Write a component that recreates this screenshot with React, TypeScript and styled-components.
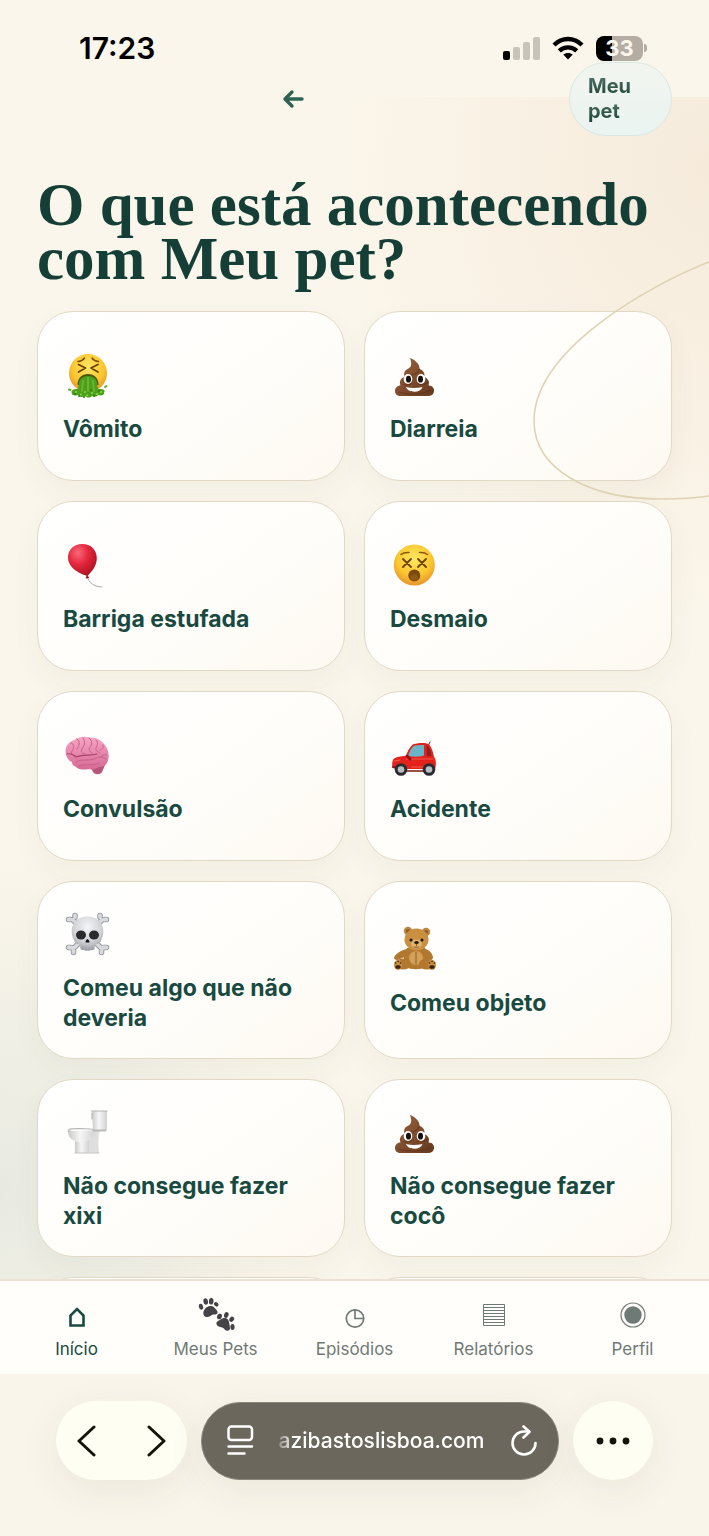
import { ReactNode } from "react"
import { createGlobalStyle, styled } from "styled-components"

const GlobalStyle = createGlobalStyle`
    * {
        box-sizing: border-box;
    }

    body {
        margin: 0;
        background: #fbf6eb;
        font-family: Inter, "Liberation Sans", sans-serif;
        color: #184a41;
    }

    button {
        border: 0 none;
        background: none;
        padding: 0;
        font-family: inherit;
        color: inherit;
        cursor: pointer;
    }

    svg {
        display: block;
        flex-shrink: 0;
    }
`

const Screen = styled.div`
    display: flex;
    flex-direction: column;
    height: 100vh;
    overflow: hidden;
    background:
        linear-gradient(#fbf6eb, #fbf6eb) 0 0 / 100% 97px no-repeat,
        radial-gradient(ellipse 380px 460px at 100% 170px, #f6ebdb 0%, #f6ebdb00 100%),
        radial-gradient(ellipse 300px 340px at 0 1190px, #e8eae1 0%, #e8eae100 100%),
        #fbf6eb;
`

const StatusBar = styled.div`
    display: flex;
    align-items: center;
    justify-content: space-between;
    flex-shrink: 0;
    height: 62px;
    padding: 34px 62px 0 79px;
    color: #000000;

    time {
        font-size: 30px;
        line-height: 28px;
        font-weight: 600;
    }
`

const StatusIcons = styled.div`
    display: flex;
    align-items: center;
    gap: 12px;
`

const Battery = styled.div`
    display: flex;
    align-items: center;
    gap: 1px;

    span {
        width: 47px;
        height: 25px;
        border-radius: 8px;
        background: linear-gradient(90deg, #000000 34%, #b3ada3 34%);
        color: #fbf6eb;
        font-size: 22px;
        line-height: 25px;
        font-weight: 700;
        text-align: center;
    }

    i {
        width: 3px;
        height: 8px;
        border-radius: 0 3px 3px 0;
        background: #b3ada3;
    }
`

const Content = styled.main`
    position: relative;
    flex: 1;
    min-height: 0;
    overflow: hidden auto;
    scrollbar-width: none;
    padding: 0 37px;
`

const Header = styled.header`
    display: grid;
    grid-template-columns: 1fr 103px;
    gap: 20px;
    align-items: center;
    justify-items: center;
`

const PetChip = styled.button`
    && {
        width: 100%;
        padding: 11px 18px;
        border: 1px solid #dbe7e2;
        border-radius: 37px;
        background: linear-gradient(#f2f5ef, #eaf4f1);
        font-size: 20px;
        line-height: 25px;
        font-weight: 700;
        text-align: left;
    }

    span {
        color: transparent;
        background: linear-gradient(#56766c, #1b4238);
        background-clip: text;
    }
`

const Title = styled.h1`
    margin: 42px 0 25px;
    font-family: Georgia, "Liberation Serif", serif;
    font-size: 61px;
    line-height: 54px;
    font-weight: 700;
    color: #153f36;
`

const Grid = styled.div`
    display: grid;
    grid-template-columns: 1fr 1fr;
    gap: 20px 19px;
    padding-bottom: 20px;
`

const Card = styled.button`
    && {
        display: flex;
        flex-direction: column;
        justify-content: center;
        align-items: flex-start;
        gap: 14px;
        min-height: 170px;
        padding: 25px;
        border: 1px solid #e2d8c6;
        border-radius: 36px;
        background: linear-gradient(145deg, #ffffff, #fefdf9 60%, #fef9f1);
        box-shadow: 0 12px 30px #3c3c280b;
        font-size: 23px;
        line-height: 30px;
        font-weight: 700;
        text-align: left;
    }
`

const Blob = styled.svg`
    position: absolute;
    top: 196px;
    right: 0;
    pointer-events: none;
`

const TabBar = styled.nav`
    display: grid;
    grid-template-columns: repeat(5, 1fr);
    flex-shrink: 0;
    height: 95px;
    padding: 15px 7px 0;
    border-top: 2px solid #ebe1d5;
    background: #fffefa;
`

const Tab = styled.button<{ $active?: boolean }>`
    && {
        display: flex;
        flex-direction: column;
        align-items: center;
        gap: 5px;
        font-size: 17px;
        line-height: 20px;
        color: ${({ $active }) => ($active ? "#184a41" : "#6f7a77")};
    }
`

const BrowserBar = styled.div`
    display: flex;
    align-items: center;
    gap: 14px;
    flex-shrink: 0;
    height: 162px;
    padding: 0 56px 29px;
    background: #faf5ea;
`

const Pill = styled.div`
    display: flex;
    justify-content: space-between;
    align-items: center;
    width: 131px;
    height: 79px;
    padding: 0 20px;
    border-radius: 40px;
    background: #fffef3;
    box-shadow: 0 10px 40px #3c362812;
`

const RoundButton = styled.button`
    && {
        display: flex;
        justify-content: center;
        align-items: center;
        width: 80px;
        height: 79px;
        border-radius: 50%;
        background: #fffef3;
        box-shadow: 0 10px 40px #3c362812;
    }
`

const Address = styled.div`
    display: flex;
    flex: 1;
    align-items: center;
    justify-content: space-between;
    height: 78px;
    padding: 0 21px 0 25px;
    border: 1px solid #8b867b;
    border-radius: 39px;
    background: #6c675c;
    box-shadow: 0 10px 40px #3c362812;
    color: #ffffff;

    a {
        color: #ffffff;
        font-size: 21px;
        line-height: 26px;
        font-weight: 500;
        text-decoration: none;
        mask-image: linear-gradient(90deg, #00000044, #000000 14px);
    }
`

const Emoji = ({ children }: { children: ReactNode }) => (
    <svg width="48" height="52" viewBox="0 0 48 52" fill="none" strokeLinecap="round" strokeLinejoin="round" aria-hidden="true">
        <defs>
            <radialGradient id="face" cx=".5" cy=".35" r=".65">
                <stop offset="0" stopColor="#ffe863" />
                <stop offset=".65" stopColor="#fbc62f" />
                <stop offset="1" stopColor="#e8932a" />
            </radialGradient>
            <radialGradient id="balloon" cx=".35" cy=".28" r=".8">
                <stop offset="0" stopColor="#f9697a" />
                <stop offset=".45" stopColor="#e5273c" />
                <stop offset="1" stopColor="#a8101f" />
            </radialGradient>
            <linearGradient id="poop" x1="0" y1="0" x2="1" y2="1">
                <stop offset="0" stopColor="#9a6340" />
                <stop offset="1" stopColor="#65381d" />
            </linearGradient>
            <linearGradient id="brain" x1="0" y1="0" x2="0" y2="1">
                <stop offset="0" stopColor="#f7a5c3" />
                <stop offset="1" stopColor="#d76a95" />
            </linearGradient>
            <radialGradient id="bone" cx=".5" cy=".3" r=".75">
                <stop offset="0" stopColor="#f4f5f8" />
                <stop offset=".6" stopColor="#cfd1d6" />
                <stop offset="1" stopColor="#96989e" />
            </radialGradient>
            <linearGradient id="china" x1="0" y1="0" x2="1" y2="0">
                <stop offset="0" stopColor="#c9c9c9" />
                <stop offset=".45" stopColor="#f6f6f6" />
                <stop offset="1" stopColor="#d2d2d2" />
            </linearGradient>
        </defs>
        {children}
    </svg>
)

const Vomit = () => (
    <Emoji>
        <circle cx="25" cy="25" r="19" fill="url(#face)" />
        <path d="M15 13.500q4.500-.5 6.500-3.500M35.500 13.500q-4.500-.5-6.500-3.500" stroke="#7b4a12" strokeWidth="1.500" />
        <path d="M15.500 16.500l7 3.500-7 4M35 16.500l-7 3.500 7 4" stroke="#6b3f10" strokeWidth="1.700" />
        <path d="M14.500 37c0-7 4-11 10.500-11s10.500 4 10.500 11z" fill="#4a5a12" />
        <path d="M16 35c0-4 4-7 9-7s9 3 9 7l1 6c5-.5 8 1 6 3.500 1 3-4 3.500-6 2.500-1 2-4 2-6 1-2 2-5 2-7 0-3 2-6 1-6-1-3 1-8 .5-7-1.500-2-3 2-5 6-4.500z" fill="#4d9f1c" />
        <path d="M20 33l-1 10M25 30v13M30 33l1 10" stroke="#6ab82f" strokeWidth="1.800" />
        <path d="M13 44h.1M18 46.500h.1M24 47.500h.1M29 45h.1M34 46h.1M22 44h.1M38 44h.1" stroke="#84cf43" strokeWidth="2.200" />
        <path d="M16 48h.1M21 49h.1M31 48h.1M28 42h.1M36 43h.1M12 46h.1" stroke="#2f780d" strokeWidth="1.800" />
        <path d="M6 41.500l1.500.5M42 39l1.500-1" stroke="#5fae2a" strokeWidth="2" />
    </Emoji>
)

const Poop = () => (
    <Emoji>
        <path d="M20 10c5 2 10 6 9.500 11 4 1 6 5 4.500 8 4 1 6 5 4.500 8.500 4 0 6 3 5.500 6-.5 3-3 4.500-6 4.500H11c-4 0-6-2-6-5s2-5.500 5.500-5.500C9 34 10.500 30 14.500 29c-1-4 0-7 4-8.500 3-1.500 3.500-5 1.500-10.500z" fill="url(#poop)" />
        <path d="M17 27c5 1 11-1 12.500-6M13 36.500c4 1 7 0 9-1M28 36c4 1 8 0 10-2M9 44c8 3 24 3 32-2" stroke="#5a3019" strokeWidth="1.200" opacity=".6" />
        <ellipse cx="18" cy="31" rx="4.300" ry="5" fill="#ffffff" />
        <ellipse cx="31" cy="31" rx="4.300" ry="5" fill="#ffffff" />
        <ellipse cx="18.500" cy="31.200" rx="2.500" ry="3.400" fill="#15110f" />
        <ellipse cx="30.500" cy="31.200" rx="2.500" ry="3.400" fill="#15110f" />
        <path d="M16 39c5 1.200 11 1.200 16.500 0-1 3-4 4.700-8.200 4.700S17 42 16 39z" fill="#ffffff" />
    </Emoji>
)

const Balloon = () => (
    <Emoji>
        <path d="M24 39c2 5 6 9.500 14.500 10" stroke="#aaa6a6" strokeWidth="1" />
        <path d="M19 6c9 0 15 6 14.800 14.500C33.600 29 28 34 24.500 38 17 36 5 30 5 19.500 5 11.500 11 6 19 6z" fill="url(#balloon)" />
        <path d="M24 37l-1.500 3.500 4-.5z" fill="#a8101f" />
    </Emoji>
)

const Dizzy = () => (
    <Emoji>
        <circle cx="24.300" cy="27" r="20.500" fill="url(#face)" />
        <path d="M11 16.500q3-2.500 8-2M37.500 16.500q-3-2.500-8-2" stroke="#8a5a13" strokeWidth="1.500" />
        <path d="M13 21l8 8M21 21l-8 8M28 21l8 8M36 21l-8 8" stroke="#6d420d" strokeWidth="1.800" />
        <circle cx="24.300" cy="37.500" r="6" fill="#7a4a10" />
        <ellipse cx="24.300" cy="39.500" rx="4" ry="3" fill="#8f5a18" />
    </Emoji>
)

const Brain = () => (
    <Emoji>
        <path d="M27 38l3 6c2 3 7 3 9 0l3-7z" fill="#b85478" />
        <path d="M3 27C1 20 5 14 11 12 16 9 22 8 27 9.500 33 9 38 12 41 16c5 5 6 13 3 19-2 3-5 4-8 4-3 2-7 3-10 2-5 1-10 1-13-2-3-1-4-3-4-5-3-1-5-4-6-7z" fill="url(#brain)" />
        <path d="M8 15c4 1 3 5 1 8s1 5 4 5M14 11c4 3 2 7 0 10M20 10c3 4 1 8-1 11s1 5 3 5M26 10c4 3 3 7 1 9s0 5 2 6M33 12c3 3 1 6 0 8s2 4 4 5M40 17c1 3-1 5-3 5M13 34c6-4 14 0 20-4 4-2 7-1 10 1M16 38c7-3 14 1 20-3M44 27c-3-1-5 0-6 2" stroke="#c4618b" strokeWidth="1" />
        <path d="M4 26c4-1 7 1 9 3 8-3 15-1 21-3" stroke="#a8436c" strokeWidth="1.200" />
    </Emoji>
)

const Car = () => (
    <Emoji>
        <path d="M38 18l2-4" stroke="#333333" strokeWidth="1" />
        <path d="M2.500 40c-.8-5-.2-9 2.500-10 3-1.500 8-2 11-2 2-6 5-11 8-12 5-1.500 12-1.500 14.500 0 3 2.500 5 9 5.500 13 2 1 2.500 9 1 12H6z" fill="#e3221c" />
        <path d="M18 28c1.500-5 4-9.500 7-10.500 3-.7 7-.7 9-.5v10.500c-4 1.500-11 1.500-16 .5z" fill="#69b4c6" />
        <path d="M36.500 17c3 2 4.500 7 5 11l-4.500.5z" fill="#8e211f" />
        <path d="M4 33l6-1M16 31h27M22 39h11" stroke="#f4564a" strokeWidth="1.200" />
        <path d="M17 28l3 3" stroke="#a10f0e" strokeWidth="3" />
        <path d="M2.500 39h5M15 43h20" stroke="#7e1513" strokeWidth="1.500" />
        <circle cx="11" cy="41.500" r="6.300" fill="#2a2b2e" />
        <circle cx="11" cy="41.500" r="3.300" fill="#b9bec5" />
        <circle cx="39" cy="41.500" r="6.300" fill="#2a2b2e" />
        <circle cx="39" cy="41.500" r="3.300" fill="#b9bec5" />
    </Emoji>
)

const boneShape = "M10 13L39 42M39 13L10 42M5.500 12.500h2M12 8.500v1.500M43.500 12.500h-2M37 8.500v1.500M5.500 40.500h3M10.500 45.500v-2M43.500 40.500h-3M38.500 45.500v-2"

const Skull = () => (
    <Emoji>
        <path d={boneShape} stroke="#94969c" strokeWidth="5.500" />
        <path d={boneShape} stroke="#d7d9de" strokeWidth="3.800" />
        <path d="M24.500 9.500c9 0 15.800 6 15.800 14.500 0 4-1 6.500-2 8.500-.5 3-2.500 4.500-6 5l-1 5c-4 1.500-9.600 1.500-13.600 0l-1-5c-3.500-.5-5.500-2-6-5-1-2-2-4.500-2-8.500 0-8.500 6.800-14.500 15.800-14.500z" fill="url(#bone)" />
        <ellipse cx="18" cy="28" rx="5" ry="4.500" fill="#2a2a2d" />
        <ellipse cx="31" cy="28" rx="5" ry="4.500" fill="#2a2a2d" />
        <path d="M24.500 32c1.500 1 2 2 2 3.500h-4c0-1.500.5-2.500 2-3.500z" fill="#17171a" />
        <path d="M20 39.500v3M23 40v3.500M26 40v3.500M29 39.500v3" stroke="#9a9ca2" strokeWidth=".8" />
    </Emoji>
)

const Bear = () => (
    <Emoji>
        <circle cx="18" cy="9" r="4.200" fill="#bd8640" />
        <circle cx="36" cy="10" r="4.200" fill="#bd8640" />
        <circle cx="18" cy="9" r="2" fill="#8f5c26" />
        <circle cx="36" cy="10" r="2" fill="#8f5c26" />
        <path d="M17 27c-6 1-12 5-13 9 1 3 5 2 8 0l6-2zM35 27c5 1 8 5 8 9-1 3-4 2-6 0l-5-3z" fill="#b3782f" />
        <path d="M17 26h18c4 6 4 14 1 19-6 3-15 3-20 0-3-5-3-13 1-19z" fill="#b3782f" />
        <ellipse cx="26" cy="36" rx="7" ry="7" fill="#d3a058" />
        <ellipse cx="26.500" cy="17.500" rx="12" ry="11" fill="#c98f43" />
        <ellipse cx="26.500" cy="22" rx="5.500" ry="4.500" fill="#dcb26c" />
        <circle cx="21" cy="18" r="1.500" fill="#20140b" />
        <circle cx="32" cy="18" r="1.500" fill="#20140b" />
        <ellipse cx="26.500" cy="20.500" rx="2.200" ry="1.600" fill="#20140b" />
        <path d="M26.500 22v2M24 25q2.500 1 5 0M26 30v12" stroke="#7b4e1d" strokeWidth=".8" />
        <ellipse cx="13" cy="42" rx="8" ry="5.500" fill="#b3782f" />
        <ellipse cx="37" cy="42" rx="8" ry="5.500" fill="#b3782f" />
        <ellipse cx="8" cy="43" rx="4" ry="5" fill="#c98f43" />
        <ellipse cx="42" cy="43" rx="4" ry="5" fill="#c98f43" />
        <path d="M7 45h2M41 45h2" stroke="#3b2513" strokeWidth="3.500" />
        <path d="M5.500 41h.1M8 39.500h.1M10.500 41h.1M39.500 41h.1M42 39.500h.1M44.500 41h.1" stroke="#3b2513" strokeWidth="1.600" />
    </Emoji>
)

const Toilet = () => (
    <Emoji>
        <path d="M29 6h15v19H30z" fill="url(#china)" />
        <path d="M28.500 6H44M29 8v6" stroke="#b5b5b5" strokeWidth="1.200" />
        <path d="M29 25h8c-2 6-2 14-1 23H25V32z" fill="#dedede" />
        <path d="M12 33h14v15H12z" fill="url(#china)" />
        <path d="M5 26c0 7 5 11 13 11s13-4 14-11z" fill="url(#china)" />
        <path d="M5.500 26c0-2.500 6-2 12.500-2s12 0 13 1.500h11.500" stroke="#b9b9b9" strokeWidth="1.800" />
        <path d="M7 25c6-.6 16-.6 22 0" stroke="#ededed" strokeWidth="1" />
        <path d="M12 48h24" stroke="#c4c4c4" strokeWidth="1" />
    </Emoji>
)

const symptoms = [
    { icon: <Vomit />, label: "Vômito" },
    { icon: <Poop />, label: "Diarreia" },
    { icon: <Balloon />, label: "Barriga estufada" },
    { icon: <Dizzy />, label: "Desmaio" },
    { icon: <Brain />, label: "Convulsão" },
    { icon: <Car />, label: "Acidente" },
    { icon: <Skull />, label: "Comeu algo que não deveria" },
    { icon: <Bear />, label: "Comeu objeto" },
    { icon: <Toilet />, label: "Não consegue fazer xixi" },
    { icon: <Poop />, label: "Não consegue fazer cocô" },
]

const TabIcon = ({ children }: { children: ReactNode }) => (
    <svg width="38" height="38" viewBox="0 0 38 38" fill="none" stroke="currentColor" aria-hidden="true">{children}</svg>
)

const Paws = () => (
    <g fill="#454347" stroke="none">
        <path d="M6.500 18.500c-1-4 2.500-8 6.500-8.500 3-.5 4.500 1.500 7 4.500 1.500 3-.5 4.500-3 4-2-.3-2.500.8-4 1.800-2.500 1.500-6 .7-6.500-1.800z" />
        <ellipse cx="4" cy="10.700" rx="2.100" ry="3" transform="rotate(-15 4 10.700)" />
        <ellipse cx="8.700" cy="5.500" rx="2.300" ry="3.300" transform="rotate(-10 8.700 5.500)" />
        <ellipse cx="14.200" cy="5.200" rx="2.300" ry="3.300" transform="rotate(5 14.200 5.200)" />
        <ellipse cx="19.200" cy="8.300" rx="2" ry="2.500" transform="rotate(-50 19.200 8.300)" />
        <path d="M19.500 28c-.5-2.500 2-3 4-4.500 2.500-2 6-2 7.500 0 1.500 2.500 1.500 6 2 8.500.3 3-3.500 3.500-5 1.700-1.500-2-3-2.200-5-2.700-1.500-.5-3.200-1.300-3.500-3z" />
        <ellipse cx="22.500" cy="20.500" rx="2.400" ry="2.800" transform="rotate(20 22.500 20.500)" />
        <ellipse cx="29.300" cy="19" rx="2.200" ry="3" transform="rotate(20 29.300 19)" />
        <ellipse cx="34.700" cy="23.300" rx="2.200" ry="2.800" transform="rotate(35 34.700 23.300)" />
        <ellipse cx="35.500" cy="31" rx="2.100" ry="2.900" />
    </g>
)

const tabs = [
    { label: "Início", icon: <path d="M12.500 29.500V19.500l6.500-6.500 6.500 6.500v10z" strokeWidth="2.600" /> },
    { label: "Meus Pets", icon: <Paws /> },
    { label: "Episódios", icon: <><circle cx="19" cy="22.500" r="8.700" strokeWidth="1.700" /><path d="M19 13.500v9h8.700" strokeWidth="1.700" /></> },
    { label: "Relatórios", icon: <path d="M8.500 8.500h21v21h-21zM8 11.500h22M8 14.500h22M8 17.500h22M8 20.500h22M8 23.500h22M8 26.500h22" strokeWidth="1" /> },
    { label: "Perfil", icon: <><circle cx="19" cy="19" r="12" strokeWidth="1.200" /><circle cx="19" cy="19" r="8.700" fill="currentColor" stroke="none" /></> },
]

export default () => <>
    <GlobalStyle />
    <Screen>
        <StatusBar>
            <time>17:23</time>
            <StatusIcons>
                <svg width="37" height="24" viewBox="0 0 37 24">
                    <rect x="0" y="15" width="7" height="9" rx="2" fill="#000000" />
                    <rect x="10" y="11" width="7" height="13" rx="2" fill="#c9c4ba" />
                    <rect x="20" y="6" width="7" height="18" rx="2" fill="#c9c4ba" />
                    <rect x="30" y="1" width="7" height="23" rx="2" fill="#c9c4ba" />
                </svg>
                <svg width="32" height="24" viewBox="0 0 32 24" fill="none" stroke="#000000" strokeWidth="4.400">
                    <path d="M2 9C10 1 22 1 30 9" />
                    <path d="M7.300 14.900c5-4.700 12.400-4.700 17.400 0" />
                    <path d="M16 23.500l-4.800-4.900c2.700-2.300 6.900-2.300 9.600 0z" fill="#000000" stroke="none" />
                </svg>
                <Battery><span>33</span><i /></Battery>
            </StatusIcons>
        </StatusBar>
        <Content>
            <Header>
                <button aria-label="Voltar">
                    <svg width="22" height="22" viewBox="0 0 22 22" fill="none" stroke="#2d6355" strokeWidth="3.400" strokeLinecap="round" strokeLinejoin="round">
                        <path d="M20 11H3M10 4l-7 7 7 7" />
                    </svg>
                </button>
                <PetChip><span>Meu pet</span></PetChip>
            </Header>
            <Title>O que está acontecendo com Meu pet?</Title>
            <Grid>
                {symptoms.map(({ icon, label }) => (
                    <Card key={label}>
                        {icon}
                        <span>{label}</span>
                    </Card>
                ))}
                <Card as="div" />
                <Card as="div" />
            </Grid>
            <Blob width="178" height="242" viewBox="0 0 178 242" fill="none" stroke="#dfd2b2" strokeWidth="1.500">
                <path d="M178 4C119 27 2 92 3 164c1 48 56 77 126 77 20 0 37-1 49-3" />
            </Blob>
        </Content>
        <TabBar>
            {tabs.map(({ icon, label }, i) => (
                <Tab key={label} $active={i === 0}>
                    <TabIcon>{icon}</TabIcon>
                    {label}
                </Tab>
            ))}
        </TabBar>
        <BrowserBar>
            <Pill>
                <button aria-label="Página anterior">
                    <svg width="22" height="32" viewBox="0 0 22 32" fill="none" stroke="#14140c" strokeWidth="3" strokeLinecap="round" strokeLinejoin="round">
                        <path d="M18 2L3 16l15 14" />
                    </svg>
                </button>
                <button aria-label="Próxima página">
                    <svg width="22" height="32" viewBox="0 0 22 32" fill="none" stroke="#14140c" strokeWidth="3" strokeLinecap="round" strokeLinejoin="round">
                        <path d="M4 2l15 14L4 30" />
                    </svg>
                </button>
            </Pill>
            <Address>
                <button aria-label="Opções da página">
                    <svg width="27" height="31" viewBox="0 0 27 31" fill="none" stroke="#ffffff" strokeWidth="2.500" strokeLinecap="round">
                        <rect x="1.500" y="1.500" width="23.500" height="13.500" rx="3" />
                        <path d="M1.500 21.500H25M1.500 28.500h16" />
                    </svg>
                </button>
                <a href="#">azibastoslisboa.com</a>
                <button aria-label="Recarregar">
                    <svg width="28" height="32" viewBox="0 0 28 32" fill="none" stroke="#ffffff" strokeWidth="2.600" strokeLinecap="round" strokeLinejoin="round">
                        <path d="M26.500 18A11.500 11.500 0 1 1 15 6.500h5" />
                        <path d="M14.500 1.500l6 5.300-6 5.700" />
                    </svg>
                </button>
            </Address>
            <RoundButton aria-label="Mais">
                <svg width="34" height="8" viewBox="0 0 34 8" fill="#14140c">
                    <circle cx="4" cy="4" r="3.400" />
                    <circle cx="17" cy="4" r="3.400" />
                    <circle cx="30" cy="4" r="3.400" />
                </svg>
            </RoundButton>
        </BrowserBar>
    </Screen>
</>
